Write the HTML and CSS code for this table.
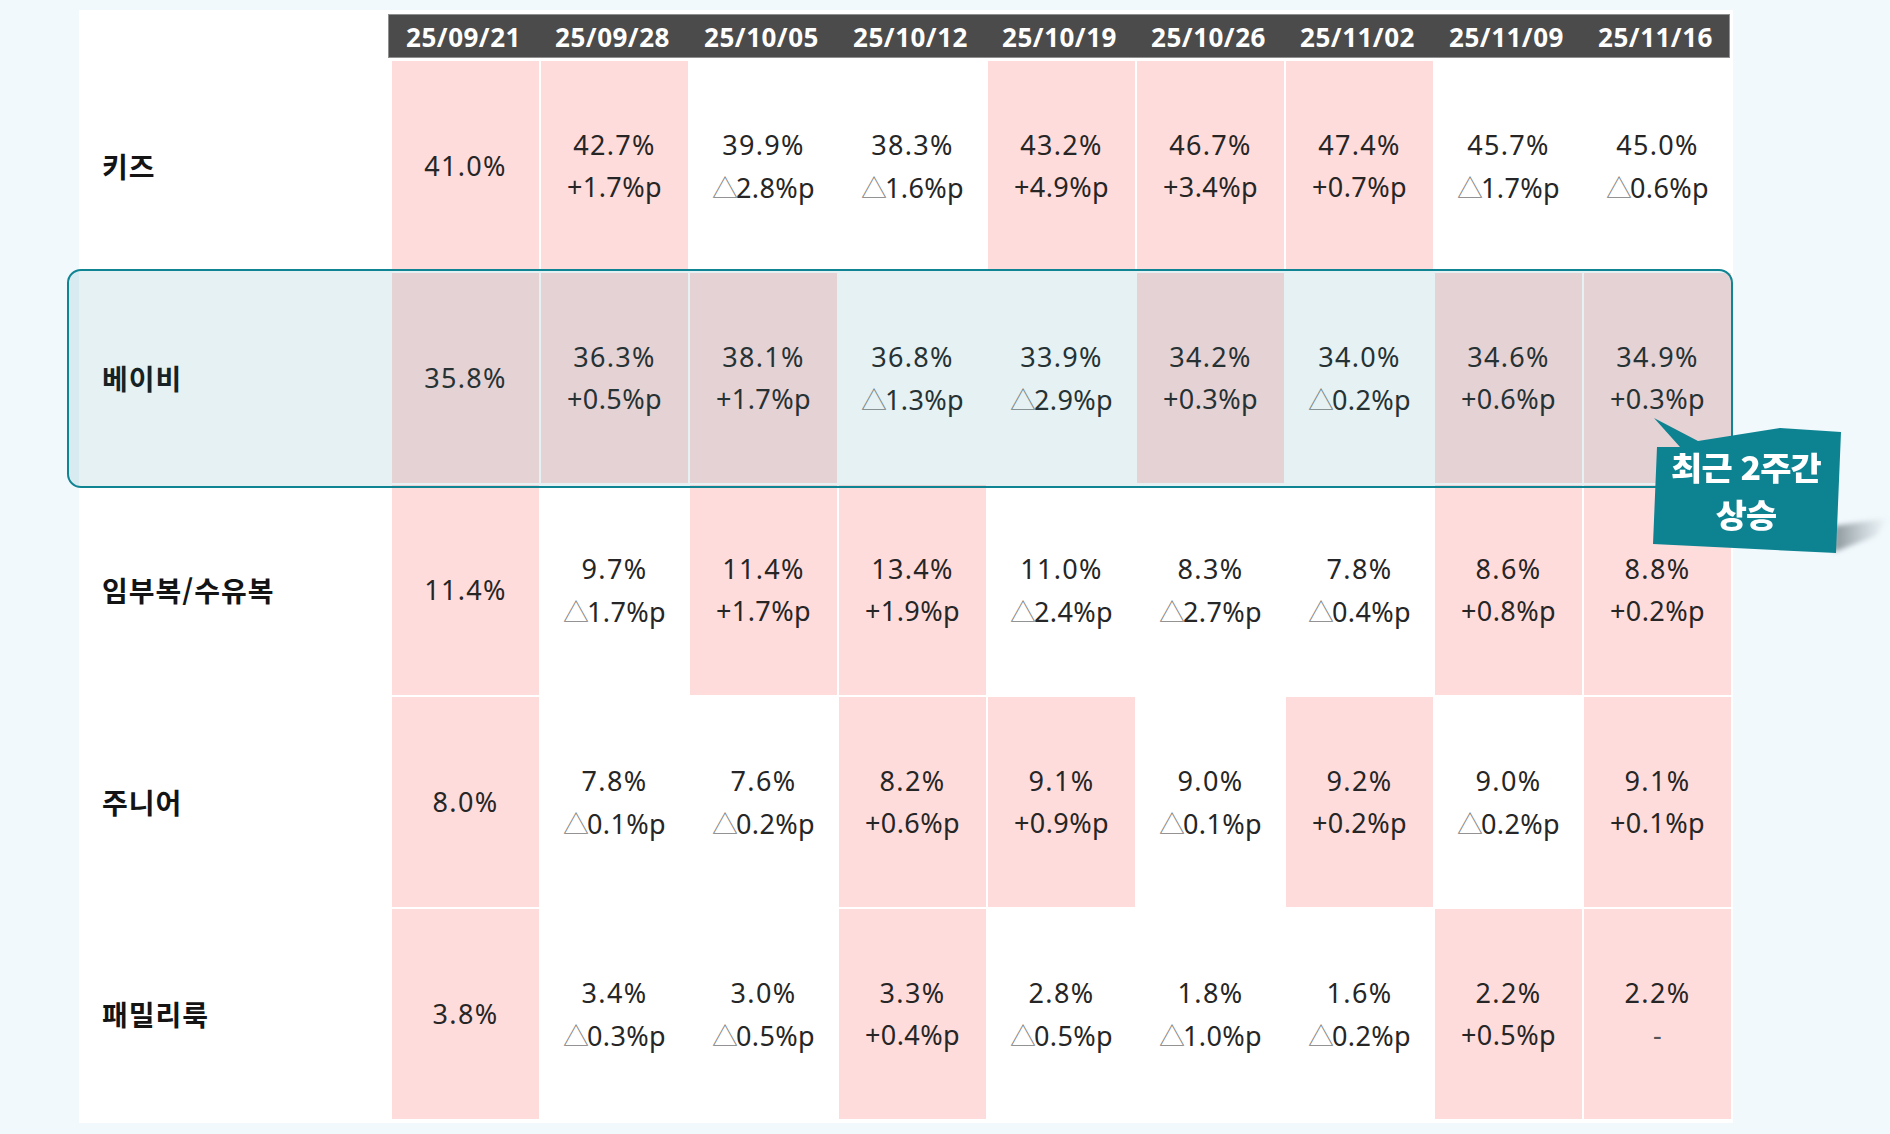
FILE: index.html
```html
<!DOCTYPE html>
<html lang="ko">
<head>
<meta charset="utf-8">
<title>카테고리 비중 추이</title>
<link rel="stylesheet" href="styles.css">
</head>
<body>
<div class="page">
  <div class="panel">
    <div class="head">
      <div class="hcell">25/09/21</div>
      <div class="hcell">25/09/28</div>
      <div class="hcell">25/10/05</div>
      <div class="hcell">25/10/12</div>
      <div class="hcell">25/10/19</div>
      <div class="hcell">25/10/26</div>
      <div class="hcell">25/11/02</div>
      <div class="hcell">25/11/09</div>
      <div class="hcell">25/11/16</div>
    </div>
    <div class="grid">
      <div class="label">키즈</div>
      <div class="cell up"><span class="v">41.0%</span></div>
      <div class="cell up"><span class="v">42.7%</span><span class="d">+1.7%p</span></div>
      <div class="cell"><span class="v">39.9%</span><span class="d"><i class="tri">△</i>2.8%p</span></div>
      <div class="cell"><span class="v">38.3%</span><span class="d"><i class="tri">△</i>1.6%p</span></div>
      <div class="cell up"><span class="v">43.2%</span><span class="d">+4.9%p</span></div>
      <div class="cell up"><span class="v">46.7%</span><span class="d">+3.4%p</span></div>
      <div class="cell up"><span class="v">47.4%</span><span class="d">+0.7%p</span></div>
      <div class="cell"><span class="v">45.7%</span><span class="d"><i class="tri">△</i>1.7%p</span></div>
      <div class="cell"><span class="v">45.0%</span><span class="d"><i class="tri">△</i>0.6%p</span></div>

      <div class="label">베이비</div>
      <div class="cell up"><span class="v">35.8%</span></div>
      <div class="cell up"><span class="v">36.3%</span><span class="d">+0.5%p</span></div>
      <div class="cell up"><span class="v">38.1%</span><span class="d">+1.7%p</span></div>
      <div class="cell"><span class="v">36.8%</span><span class="d"><i class="tri">△</i>1.3%p</span></div>
      <div class="cell"><span class="v">33.9%</span><span class="d"><i class="tri">△</i>2.9%p</span></div>
      <div class="cell up"><span class="v">34.2%</span><span class="d">+0.3%p</span></div>
      <div class="cell"><span class="v">34.0%</span><span class="d"><i class="tri">△</i>0.2%p</span></div>
      <div class="cell up"><span class="v">34.6%</span><span class="d">+0.6%p</span></div>
      <div class="cell up"><span class="v">34.9%</span><span class="d">+0.3%p</span></div>

      <div class="label">임부복/수유복</div>
      <div class="cell up"><span class="v">11.4%</span></div>
      <div class="cell"><span class="v">9.7%</span><span class="d"><i class="tri">△</i>1.7%p</span></div>
      <div class="cell up"><span class="v">11.4%</span><span class="d">+1.7%p</span></div>
      <div class="cell up"><span class="v">13.4%</span><span class="d">+1.9%p</span></div>
      <div class="cell"><span class="v">11.0%</span><span class="d"><i class="tri">△</i>2.4%p</span></div>
      <div class="cell"><span class="v">8.3%</span><span class="d"><i class="tri">△</i>2.7%p</span></div>
      <div class="cell"><span class="v">7.8%</span><span class="d"><i class="tri">△</i>0.4%p</span></div>
      <div class="cell up"><span class="v">8.6%</span><span class="d">+0.8%p</span></div>
      <div class="cell up"><span class="v">8.8%</span><span class="d">+0.2%p</span></div>

      <div class="label">주니어</div>
      <div class="cell up"><span class="v">8.0%</span></div>
      <div class="cell"><span class="v">7.8%</span><span class="d"><i class="tri">△</i>0.1%p</span></div>
      <div class="cell"><span class="v">7.6%</span><span class="d"><i class="tri">△</i>0.2%p</span></div>
      <div class="cell up"><span class="v">8.2%</span><span class="d">+0.6%p</span></div>
      <div class="cell up"><span class="v">9.1%</span><span class="d">+0.9%p</span></div>
      <div class="cell"><span class="v">9.0%</span><span class="d"><i class="tri">△</i>0.1%p</span></div>
      <div class="cell up"><span class="v">9.2%</span><span class="d">+0.2%p</span></div>
      <div class="cell"><span class="v">9.0%</span><span class="d"><i class="tri">△</i>0.2%p</span></div>
      <div class="cell up"><span class="v">9.1%</span><span class="d">+0.1%p</span></div>

      <div class="label">패밀리룩</div>
      <div class="cell up"><span class="v">3.8%</span></div>
      <div class="cell"><span class="v">3.4%</span><span class="d"><i class="tri">△</i>0.3%p</span></div>
      <div class="cell"><span class="v">3.0%</span><span class="d"><i class="tri">△</i>0.5%p</span></div>
      <div class="cell up"><span class="v">3.3%</span><span class="d">+0.4%p</span></div>
      <div class="cell"><span class="v">2.8%</span><span class="d"><i class="tri">△</i>0.5%p</span></div>
      <div class="cell"><span class="v">1.8%</span><span class="d"><i class="tri">△</i>1.0%p</span></div>
      <div class="cell"><span class="v">1.6%</span><span class="d"><i class="tri">△</i>0.2%p</span></div>
      <div class="cell up"><span class="v">2.2%</span><span class="d">+0.5%p</span></div>
      <div class="cell up"><span class="v">2.2%</span><span class="d dash">-</span></div>
    </div>
  </div>

  <div class="highlight"></div>

  <svg class="badge-shape" width="250" height="150" viewBox="0 0 250 150" aria-hidden="true">
    <defs>
      <linearGradient id="sh" x1="0" y1="0" x2="1" y2="0">
        <stop offset="0" stop-color="#7f8a8f" stop-opacity="0.9"/>
        <stop offset="1" stop-color="#9aa4a8" stop-opacity="0"/>
      </linearGradient>
      <filter id="blur" x="-20%" y="-50%" width="140%" height="200%">
        <feGaussianBlur stdDeviation="2.5"/>
      </filter>
    </defs>
    <polygon points="194,116 248,108 236,126 194,142" fill="url(#sh)" filter="url(#blur)"/>
    <polygon points="14,8 58,31 140,18 201,22 196,143 13,134 17,37 40,37" fill="#0d8392"/>
  </svg>
  <div class="badge-text">
    <div class="badge-line">최근 2주간</div>
    <div class="badge-line">상승</div>
  </div>
</div>
</body>
</html>
```

FILE: styles.css
```css
html, body {
  margin: 0;
  padding: 0;
}

body {
  background: #f1f9fd;
  width: 1890px;
  height: 1134px;
  overflow: hidden;
  font-family: "Noto Sans", "Noto Sans CJK KR", sans-serif;
  color: #222;
}

.page {
  position: relative;
  width: 1890px;
  height: 1134px;
  padding-top: 10px;
  box-sizing: border-box;
}

.panel {
  margin-left: 79px;
  width: 1654px;
  height: 1113px;
  background: #fff;
  padding: 4px 3px 4px 0;
  box-sizing: border-box;
  display: flex;
  flex-direction: column;
  gap: 3px;
}

.head {
  margin-left: 309px;
  width: 1342px;
  height: 44px;
  box-sizing: border-box;
  background: #4b4b4b;
  border: 1px solid #8f8f8f;
  padding-left: 1px;
  display: grid;
  grid-template-columns: repeat(9, 147px);
  column-gap: 2px;
}

.hcell {
  color: #fff;
  font-family: "Noto Sans", sans-serif;
  font-weight: 700;
  font-size: 26px;
  letter-spacing: 0.5px;
  display: flex;
  align-items: center;
  justify-content: center;
  padding-top: 1px;
}

.grid {
  display: grid;
  grid-template-columns: 310px repeat(9, 147px);
  grid-template-rows: repeat(5, 210px);
  column-gap: 2px;
  row-gap: 2px;
  padding-left: 1px;
}

.label {
  display: flex;
  align-items: center;
  padding-left: 22px;
  font-family: "Noto Sans CJK KR", sans-serif;
  font-weight: 700;
  font-size: 28px;
  color: #141414;
  letter-spacing: 1px;
}

.cell {
  display: flex;
  flex-direction: column;
  align-items: center;
  justify-content: center;
  background: #fff;
  font-size: 27px;
  line-height: 42px;
  color: #262626;
}

.cell.up {
  background: #ffdcdc;
}

.v, .d {
  display: block;
}

.v {
  letter-spacing: 1.3px;
}

.d {
  letter-spacing: 0.4px;
}

.d.dash {
  color: #555;
}

.tri {
  font-style: normal;
  font-family: "Noto Sans CJK KR", sans-serif;
  font-weight: 300;
  color: #808080;
  font-size: 26px;
  letter-spacing: -2px;
}

.highlight {
  position: absolute;
  left: 67px;
  top: 269px;
  width: 1666px;
  height: 219px;
  box-sizing: border-box;
  border: 2px solid #0f8593;
  border-radius: 14px;
  background: rgba(40, 140, 155, 0.12);
}

.badge-shape {
  position: absolute;
  left: 1640px;
  top: 410px;
}

.badge-text {
  position: absolute;
  left: 1650px;
  top: 443px;
  width: 192px;
  text-align: center;
  color: #fff;
  font-family: "Noto Sans CJK KR", sans-serif;
  font-weight: 900;
  font-size: 32px;
  line-height: 47px;
  letter-spacing: -0.8px;
  transform: scaleX(1.06);
}

.badge-line {
  height: 47px;
  white-space: nowrap;
}
```
